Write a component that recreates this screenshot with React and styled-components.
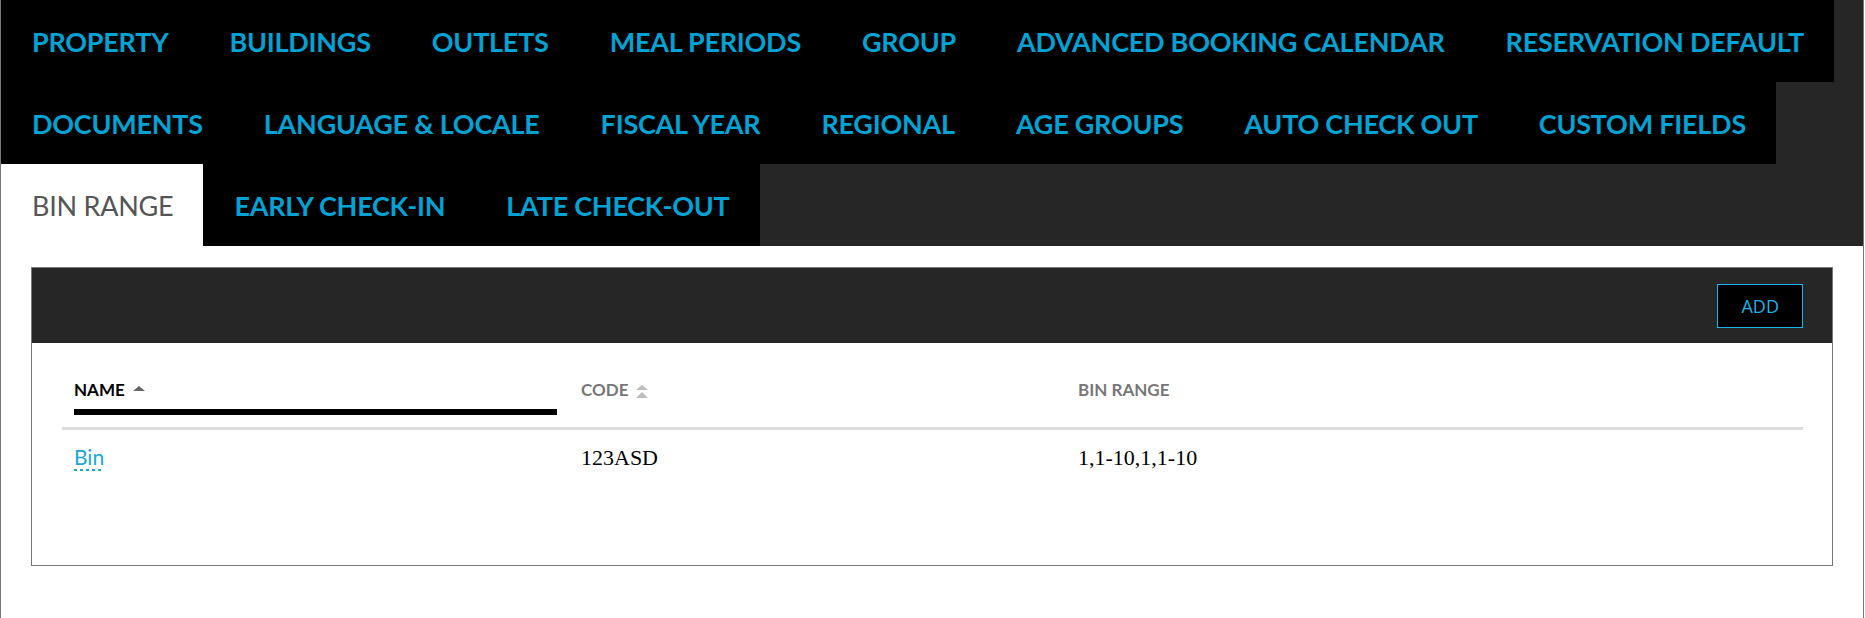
import React from 'react';
import styled, { createGlobalStyle } from 'styled-components';

const GlobalStyle = createGlobalStyle`
  html, body {
    margin: 0;
    padding: 0;
    background: #fff;
  }
  body {
    font-family: Lato, "Open Sans", sans-serif;
  }
`;

const tabs = [
  'PROPERTY',
  'BUILDINGS',
  'OUTLETS',
  'MEAL PERIODS',
  'GROUP',
  'ADVANCED BOOKING CALENDAR',
  'RESERVATION DEFAULT',
  'DOCUMENTS',
  'LANGUAGE & LOCALE',
  'FISCAL YEAR',
  'REGIONAL',
  'AGE GROUPS',
  'AUTO CHECK OUT',
  'CUSTOM FIELDS',
  'BIN RANGE',
  'EARLY CHECK-IN',
  'LATE CHECK-OUT'
];

const rows = [
  { name: 'Bin', code: '123ASD', range: '1,1-10,1,1-10' }
];

function App() {
  return (
    <>
      <GlobalStyle />
      <Frame>
        <TabBar>
          {tabs.map(label => (
            <Tab key={label} active={label === 'BIN RANGE'}>
              {label}
            </Tab>
          ))}
        </TabBar>

        <Panel>
          <PanelHeader>
            <AddBtn>ADD</AddBtn>
          </PanelHeader>
          <PanelBody>
            <Table>
              <thead>
                <HeadRow>
                  <Th width={483}>
                    <HeadLabel sorted>
                      NAME
                      <SortUp />
                    </HeadLabel>
                  </Th>
                  <Th width={473}>
                    <HeadLabel>
                      CODE
                      <SortBoth width="12" height="13" viewBox="0 0 12 13">
                        <polygon points="6,0 12,5 0,5" fill="#bdbdbd" />
                        <polygon points="6,7 12,13 0,13" fill="#bdbdbd" />
                      </SortBoth>
                    </HeadLabel>
                  </Th>
                  <Th>
                    <HeadLabel>BIN RANGE</HeadLabel>
                  </Th>
                </HeadRow>
              </thead>
              <tbody>
                {rows.map(row => (
                  <tr key={row.code}>
                    <Td>
                      <NameLink>{row.name}</NameLink>
                    </Td>
                    <Td serif>{row.code}</Td>
                    <Td serif>{row.range}</Td>
                  </tr>
                ))}
              </tbody>
            </Table>
          </PanelBody>
        </Panel>
      </Frame>
    </>
  );
}

export default App;

const Frame = styled.div`
  box-sizing: border-box;
  width: 1864px;
  min-height: 618px;
  border-left: 1px solid #777;
  border-right: 1px solid #777;
  padding-bottom: 51px;
`;

const TabBar = styled.ul`
  display: flex;
  flex-wrap: wrap;
  margin: 0;
  padding: 0;
  list-style: none;
  background: #262626;
`;

const Tab = styled.li`
  display: flex;
  align-items: center;
  height: 82px;
  padding: 0 30px 0 31px;
  box-sizing: border-box;
  background: ${props => (props.active ? '#fff' : '#000')};
  color: ${props => (props.active ? '#555' : '#00a3d4')};
  font-family: Lato, sans-serif;
  font-weight: ${props => (props.active ? 400 : 700)};
  font-size: 27px;
  letter-spacing: -0.25px;
  white-space: nowrap;
  cursor: pointer;
`;

const Panel = styled.section`
  margin: 21px 30px 0;
  border: 1px solid #777;
`;

const PanelHeader = styled.div`
  display: flex;
  justify-content: flex-end;
  align-items: center;
  height: 75px;
  padding: 0 29px;
  background: #262626;
`;

const AddBtn = styled.button`
  height: 44px;
  padding: 0 23px;
  border: 1px solid #1bb3e6;
  background: #000;
  color: #1bb3e6;
  font-family: "Open Sans", "Liberation Sans", sans-serif;
  font-size: 18px;
  cursor: pointer;
`;

const PanelBody = styled.div`
  box-sizing: border-box;
  min-height: 222px;
  padding: 0 29px 0 30px;
  background: #fff;
`;

const Table = styled.table`
  width: 100%;
  border-collapse: collapse;
  table-layout: fixed;
`;

const HeadRow = styled.tr`
  border-bottom: 3px solid #ddd;
`;

const Th = styled.th`
  width: ${props => (props.width ? `${props.width}px` : 'auto')};
  padding: 36px 12px 12px;
  text-align: left;
  vertical-align: bottom;
`;

const HeadLabel = styled.div`
  display: flex;
  align-items: center;
  height: 20px;
  padding-bottom: 10px;
  border-bottom: 6px solid ${props => (props.sorted ? '#000' : 'transparent')};
  color: ${props => (props.sorted ? '#000' : '#777')};
  font-family: Lato, sans-serif;
  font-weight: 700;
  font-size: 17px;
`;

const SortUp = styled.span`
  width: 0;
  height: 0;
  margin-left: 8px;
  margin-top: -2px;
  border-left: 6px solid transparent;
  border-right: 6px solid transparent;
  border-bottom: 5px solid #666;
`;

const SortBoth = styled.svg`
  margin-left: 8px;
  margin-top: 4px;
`;

const Td = styled.td`
  padding: 15px 12px 0;
  vertical-align: baseline;
  line-height: 24px;
  color: #000;
  font-family: ${props => (props.serif ? '"Liberation Serif", serif' : 'Lato, sans-serif')};
  font-size: ${props => (props.serif ? '22px' : '21px')};
`;

const NameLink = styled.a`
  padding-bottom: 2px;
  color: #1aa7d6;
  text-decoration: none;
  background-image: repeating-linear-gradient(to right, #1aa7d6 0 3px, transparent 3px 6px);
  background-repeat: no-repeat;
  background-position: left bottom;
  background-size: 100% 2px;
  cursor: pointer;
`;
